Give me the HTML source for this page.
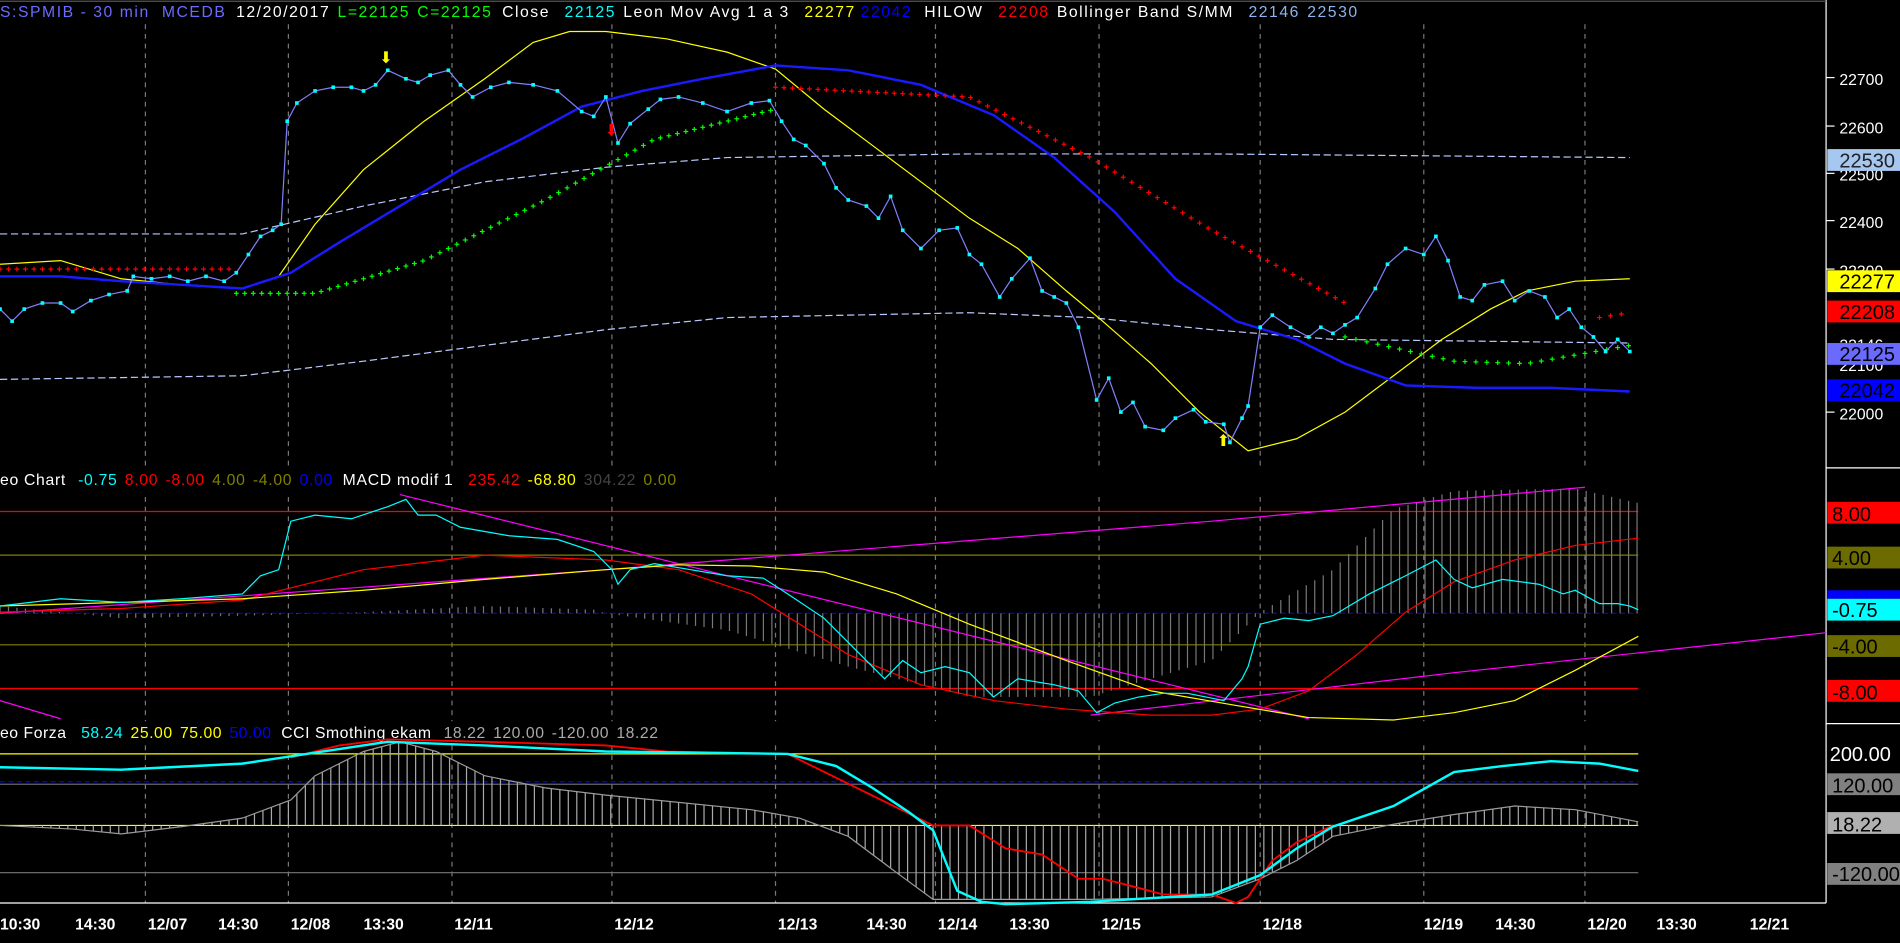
<!DOCTYPE html>
<html><head><meta charset="utf-8"><style>
html,body{margin:0;padding:0;background:#000;overflow:hidden}
svg{display:block}
text{font-family:"Liberation Sans",sans-serif;font-size:13px}
.ax{fill:#fff;font-size:16.5px}
.bt{fill:#fff;font-size:14px;font-weight:bold}
</style></head><body>
<svg id="s" width="1900" height="943" viewBox="0 0 1568 778" preserveAspectRatio="none">
<rect width="1568" height="778" fill="#000"/>
<g id="grid" stroke="#777" stroke-dasharray="4,4" stroke-width="1"></g>
<line x1="1507" y1="0" x2="1507" y2="745" stroke="#fff"/>
<line x1="1507" y1="386" x2="1568" y2="386" stroke="#fff"/>
<line x1="1507" y1="597" x2="1568" y2="597" stroke="#fff"/>
<line x1="0" y1="745" x2="1507" y2="745" stroke="#fff"/>
<line x1="0" y1="1" x2="1507" y2="1" stroke="#555"/>
<!-- header -->
<text x="0" y="14" textLength="1120" lengthAdjust="spacing"><tspan fill="#6b6bff">S:SPMIB - 30 min</tspan><tspan fill="#6b6bff" dx="10">MCEDB</tspan><tspan fill="#fff" dx="8">12/20/2017</tspan><tspan fill="#0f0" dx="6">L=22125</tspan><tspan fill="#0f0" dx="6">C=22125</tspan><tspan fill="#fff" dx="8">Close</tspan><tspan fill="#0ff" dx="12">22125</tspan><tspan fill="#fff" dx="6">Leon Mov Avg 1 a 3</tspan><tspan fill="#ff0" dx="12">22277</tspan><tspan fill="#00f" dx="4">22042</tspan><tspan fill="#fff" dx="10">HILOW</tspan><tspan fill="#f00" dx="12">22208</tspan><tspan fill="#fff" dx="6">Bollinger Band S/MM</tspan><tspan fill="#8cb4f0" dx="12">22146</tspan><tspan fill="#8cb4f0" dx="6">22530</tspan></text>
<text x="0" y="400" textLength="558" lengthAdjust="spacing"><tspan fill="#fff">eo Chart</tspan><tspan fill="#0ff" dx="10">-0.75</tspan><tspan fill="#f00" dx="6">8.00</tspan><tspan fill="#f00" dx="6">-8.00</tspan><tspan fill="#808000" dx="6">4.00</tspan><tspan fill="#808000" dx="6">-4.00</tspan><tspan fill="#00f" dx="6">0.00</tspan><tspan fill="#fff" dx="8">MACD modif 1</tspan><tspan fill="#f00" dx="12">235.42</tspan><tspan fill="#ff0" dx="6">-68.80</tspan><tspan fill="#444" dx="6">304.22</tspan><tspan fill="#808000" dx="6">0.00</tspan></text>
<text x="0" y="609" textLength="543" lengthAdjust="spacing"><tspan fill="#fff">eo Forza</tspan><tspan fill="#0ff" dx="12">58.24</tspan><tspan fill="#ff0" dx="6">25.00</tspan><tspan fill="#ff0" dx="6">75.00</tspan><tspan fill="#00f" dx="6">50.00</tspan><tspan fill="#fff" dx="8">CCI Smothing ekam</tspan><tspan fill="#aaa" dx="10">18.22</tspan><tspan fill="#aaa" dx="6">120.00</tspan><tspan fill="#aaa" dx="6">-120.00</tspan><tspan fill="#aaa" dx="6">18.22</tspan></text>
<!-- price panel -->
<polyline fill="none" stroke="#b8c8ff" stroke-dasharray="6,3" points="0,193 200,193 300,170 400,150 500,138 600,130 800,127 1000,127 1345,130"/>
<polyline fill="none" stroke="#b8c8ff" stroke-dasharray="6,3" points="0,313 200,310 300,298 400,285 500,272 600,262 800,258 900,262 1000,272 1100,280 1345,283"/>
<polyline fill="none" stroke="#ff0" points="0,218 50,215 100,230 150,235 200,238 230,228 260,185 300,140 350,100 400,65 440,35 470,26 500,26 550,32 600,43 640,57 680,90 720,120 760,150 800,180 840,205 880,240 910,265 950,300 990,340 1030,372 1070,362 1110,340 1150,310 1190,280 1230,255 1260,240 1300,232 1345,230"/>
<polyline fill="none" stroke="#1a1aff" stroke-width="2" points="0,228 50,228 100,232 150,235 200,238 240,225 280,200 330,170 380,140 430,115 480,88 530,75 580,65 640,54 700,58 760,70 820,95 870,130 920,175 970,230 1020,265 1070,280 1110,300 1160,318 1220,320 1280,320 1345,323"/>
<g id="dots"></g>
<polyline id="close" fill="none" stroke="#8080ff" points=""/>
<g id="cdots" fill="#0ff"></g>
<text x="313" y="52" fill="#ff0" font-size="18">⬇</text>
<text x="499" y="112" fill="#f00" font-size="18">⬇</text>
<text x="1004" y="368" fill="#ff0" font-size="18">⬆</text>
<!-- price axis -->
<g class="ax">
<text x="1518" y="70">22700</text><text x="1518" y="110">22600</text>
<text x="1518" y="149">22500</text><text x="1518" y="188">22400</text>
<text x="1518" y="228">22300</text><text x="1518" y="289">22146</text><text x="1518" y="306">22100</text><text x="1518" y="346">22000</text>
</g>
<g stroke="#fff"><line x1="1507" y1="64" x2="1514" y2="64"/><line x1="1507" y1="104" x2="1514" y2="104"/><line x1="1507" y1="143" x2="1514" y2="143"/><line x1="1507" y1="182" x2="1514" y2="182"/><line x1="1507" y1="222" x2="1514" y2="222"/><line x1="1507" y1="340" x2="1514" y2="340"/></g>
<rect x="1508" y="123" width="60" height="18" fill="#a6c8f0"/><text class="ax" x="1518" y="138" style="fill:#222">22530</text>
<rect x="1508" y="223" width="60" height="18" fill="#ff0"/><text class="ax" x="1518" y="238" style="fill:#000">22277</text>
<rect x="1508" y="248" width="60" height="18" fill="#f00"/><text class="ax" x="1518" y="263" style="fill:#000">22208</text>
<rect x="1508" y="283" width="60" height="18" fill="#6a6aff"/><text class="ax" x="1518" y="298" style="fill:#000">22125</text>
<rect x="1508" y="313" width="60" height="18" fill="#0000ff"/><text class="ax" x="1518" y="328" style="fill:#000">22042</text>
<!-- MACD panel -->
<line x1="0" y1="422" x2="1352" y2="422" stroke="#f00"/>
<line x1="0" y1="568" x2="1352" y2="568" stroke="#f00"/>
<line x1="0" y1="458" x2="1352" y2="458" stroke="#808000"/>
<line x1="0" y1="532" x2="1352" y2="532" stroke="#808000"/>
<line x1="0" y1="506" x2="1352" y2="506" stroke="#00f" stroke-dasharray="4,3"/>
<g id="mh" stroke="#777"></g>
<polyline fill="none" stroke="#f0f" points="330,408 580,470 1080,593"/>
<polyline fill="none" stroke="#f0f" points="0,506 500,470 1000,430 1308,402"/>
<polyline fill="none" stroke="#f0f" points="0,578 50,593"/>
<polyline fill="none" stroke="#f0f" points="900,590 1200,555 1507,522"/>
<polyline fill="none" stroke="#f00" points="0,505 100,502 200,495 300,470 400,458 500,462 560,470 620,490 700,540 760,565 820,578 880,585 950,590 1000,590 1040,585 1080,570 1120,540 1160,505 1200,480 1250,462 1300,450 1352,444"/>
<polyline fill="none" stroke="#ff0" points="0,500 100,497 200,494 300,487 400,478 500,470 560,466 620,467 680,472 740,490 800,515 880,545 950,570 1020,582 1080,592 1150,594 1200,588 1250,578 1300,553 1352,525"/>
<polyline fill="none" stroke="#0ff" points="0,500 50,494 100,497 150,494 200,490 215,475 230,470 240,430 260,425 290,428 320,418 335,412 345,425 360,425 380,435 420,442 460,445 490,455 505,470 510,482 520,470 540,465 570,470 600,475 630,477 650,490 680,510 710,540 730,560 745,545 760,555 780,550 800,555 820,575 840,560 870,565 890,570 905,588 920,580 940,575 960,572 980,572 1010,578 1025,560 1030,550 1040,515 1060,510 1080,512 1100,508 1130,490 1160,475 1185,462 1200,478 1215,485 1240,478 1270,482 1290,490 1300,487 1320,498 1335,498 1345,500 1352,503"/>
<rect x="1508" y="414" width="60" height="18" fill="#f00"/><text class="ax" x="1512" y="430" style="fill:#000">8.00</text>
<rect x="1508" y="451" width="60" height="18" fill="#6b6b00"/><text class="ax" x="1512" y="466" style="fill:#000">4.00</text>
<rect x="1508" y="487" width="60" height="7" fill="#00f"/>
<rect x="1508" y="494" width="60" height="18" fill="#0ff"/><text class="ax" x="1512" y="509" style="fill:#000">-0.75</text>
<rect x="1508" y="524" width="60" height="18" fill="#6b6b00"/><text class="ax" x="1512" y="539" style="fill:#000">-4.00</text>
<rect x="1508" y="561" width="60" height="18" fill="#f00"/><text class="ax" x="1512" y="577" style="fill:#000">-8.00</text>
<!-- CCI panel -->
<line x1="0" y1="622" x2="1352" y2="622" stroke="#ff0"/>
<line x1="0" y1="645" x2="1352" y2="645" stroke="#00f" stroke-dasharray="4,3"/>
<line x1="0" y1="647" x2="1352" y2="647" stroke="#666"/>
<line x1="0" y1="681" x2="1352" y2="681" stroke="#ff0"/>
<line x1="0" y1="720" x2="1352" y2="720" stroke="#777"/>
<g id="ch" stroke="#aaa"></g>
<polyline fill="none" stroke="#999" points="0,681 60,684 100,688 150,682 200,675 240,660 260,640 300,620 330,612 360,620 400,640 450,650 500,656 560,662 620,668 660,675 700,690 740,720 770,742 900,742 1000,740 1040,725 1070,710 1100,690 1150,680 1200,672 1250,665 1300,668 1352,678"/>
<polyline fill="none" stroke="#f00" stroke-width="1.5" points="240,625 280,615 320,610 400,612 500,615 550,620 650,622 770,681 800,681 830,700 860,705 890,725 910,725 930,730 960,738 1000,738 1020,745 1030,740 1050,710 1070,695 1100,681"/>
<polyline fill="none" stroke="#0ff" stroke-width="2" points="0,633 100,635 200,630 240,624 320,612 400,615 500,620 650,622 690,632 720,650 750,670 770,685 780,710 790,735 810,744 830,746 900,744 1000,738 1040,722 1070,700 1100,682 1150,665 1200,637 1240,632 1280,628 1320,630 1352,636"/>
<text class="ax" x="1510" y="628">200.00</text>
<rect x="1508" y="638" width="60" height="18" fill="#808080"/><text class="ax" x="1512" y="654" style="fill:#000">120.00</text>
<rect x="1508" y="670" width="60" height="18" fill="#b0b0b0"/><text class="ax" x="1512" y="686" style="fill:#000">18.22</text>
<rect x="1508" y="712" width="60" height="18" fill="#808080"/><text class="ax" x="1512" y="727" style="fill:#000">-120.00</text>
<!-- bottom axis -->
<g class="bt">
<text x="0" y="767">10:30</text><text x="62" y="767">14:30</text><text x="122" y="767">12/07</text><text x="180" y="767">14:30</text><text x="240" y="767">12/08</text><text x="300" y="767">13:30</text><text x="375" y="767">12/11</text><text x="507" y="767">12/12</text><text x="642" y="767">12/13</text><text x="715" y="767">14:30</text><text x="774" y="767">12/14</text><text x="833" y="767">13:30</text><text x="909" y="767">12/15</text><text x="1042" y="767">12/18</text><text x="1175" y="767">12/19</text><text x="1234" y="767">14:30</text><text x="1310" y="767">12/20</text><text x="1367" y="767">13:30</text><text x="1444" y="767">12/21</text>
</g>
</svg>
<script>
var NS="http://www.w3.org/2000/svg";
function el(p,t,a){var e=document.createElementNS(NS,t);for(var k in a)e.setAttribute(k,a[k]);document.getElementById(p).appendChild(e);return e;}
[120,238,373,505,640,772,907,1040,1175,1308].forEach(function(x){el("grid","line",{x1:x,y1:20,x2:x,y2:385});el("grid","line",{x1:x,y1:410,x2:x,y2:595});el("grid","line",{x1:x,y1:615,x2:x,y2:745});});
var c=[[0,255],[10,265],[20,255],[35,250],[50,250],[60,257],[75,248],[90,243],[105,240],[110,228],[125,230],[140,228],[155,232],[170,228],[185,232],[195,225],[205,210],[215,195],[225,190],[232,185],[237,100],[245,85],[260,75],[275,72],[290,72],[300,75],[310,70],[320,58],[335,65],[345,68],[355,62],[370,58],[380,70],[390,80],[405,72],[420,68],[440,70],[460,75],[480,92],[490,96],[500,80],[510,118],[520,102],[535,90],[545,82],[560,80],[580,85],[600,92],[620,85],[635,83],[645,100],[655,115],[665,120],[680,135],[690,155],[700,165],[715,170],[725,180],[735,162],[745,190],[760,205],[775,190],[790,188],[800,210],[810,218],[825,245],[835,230],[850,213],[860,240],[870,245],[880,250],[890,270],[905,330],[915,312],[925,340],[935,332],[945,352],[960,355],[970,345],[985,338],[995,348],[1010,350],[1015,365],[1025,345],[1030,335],[1040,270],[1050,260],[1065,270],[1080,278],[1090,270],[1100,275],[1110,268],[1120,262],[1135,238],[1145,218],[1160,205],[1175,210],[1185,195],[1195,215],[1205,245],[1215,248],[1225,235],[1240,232],[1250,248],[1262,240],[1275,245],[1285,262],[1295,255],[1305,270],[1315,278],[1325,290],[1335,280],[1345,290]];
document.getElementById("close").setAttribute("points",c.map(function(p){return p.join(",")}).join(" "));
c.forEach(function(p){el("cdots","rect",{x:p[0]-1.5,y:p[1]-1.5,width:3,height:3});});
function interp(pts,x){for(var i=0;i<pts.length-1;i++){if(x>=pts[i][0]&&x<=pts[i+1][0]){var t=(x-pts[i][0])/(pts[i+1][0]-pts[i][0]);return pts[i][1]+t*(pts[i+1][1]-pts[i][1]);}}return null;}
function plus(x,y,col){el("dots","line",{x1:x-2,y1:y,x2:x+2,y2:y,stroke:col});el("dots","line",{x1:x,y1:y-2,x2:x,y2:y+2,stroke:col});}
for(var x=0;x<=195;x+=7)plus(x,222,"#f00");
var g1=[[195,242],[260,242],[350,215],[450,165],[540,115],[640,90]];for(x=195;x<=640;x+=7)plus(x,interp(g1,x),"#0f0");
var r1=[[640,72],[800,80],[900,130],[1000,190],[1110,250]];for(x=640;x<=1110;x+=7)plus(x,interp(r1,x),"#f00");
var g2=[[1110,278],[1200,298],[1260,300],[1345,285]];for(x=1110;x<=1345;x+=9)plus(x,interp(g2,x),"#0f0");
for(x=1320;x<=1345;x+=9)plus(x,interp([[1320,262],[1345,258]],x),"#f00");
var mh=[[0,500],[100,510],[200,508],[300,505],[400,500],[490,503],[500,506],[600,520],[700,550],[800,575],[900,575],[1000,545],[1035,510],[1040,505],[1100,470],[1150,420],[1200,405],[1300,403],[1352,415]];
for(x=0;x<=1352;x+=7){var y=interp(mh,x);el("mh","line",{x1:x,y1:506,x2:x,y2:y});}
var ch=[[0,681],[60,684],[100,688],[150,682],[200,675],[240,660],[260,640],[300,620],[330,612],[360,620],[400,640],[450,650],[500,656],[560,662],[620,668],[660,675],[700,690],[740,720],[770,742],[900,742],[1000,740],[1040,725],[1070,710],[1100,690],[1150,680],[1200,672],[1250,665],[1300,668],[1352,678]];
for(x=0;x<=1352;x+=7){var y=interp(ch,x);el("ch","line",{x1:x,y1:681,x2:x,y2:y});}
</script>
</body></html>
